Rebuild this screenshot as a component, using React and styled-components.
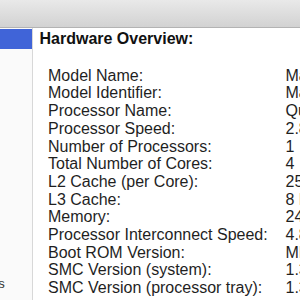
import React, { useLayoutEffect, useRef } from "react";
import styled, { createGlobalStyle } from "styled-components";

const Global = createGlobalStyle`
  html, body { margin: 0; padding: 0; background: #ffffff; }
  #root { width: 300px; height: 300px; overflow: hidden; }
`;

const Window = styled.div`
  width: 300px;
  height: 300px;
  display: flex;
  flex-direction: column;
  overflow: hidden;
  background: #ffffff;
  font-family: "Liberation Sans", Arial, sans-serif;
`;

const Toolbar = styled.div`
  flex: 0 0 27px;
  background: linear-gradient(#e9e9e9, #d2d2d2);
  border-bottom: 1px solid #b3b3b3;
`;

const Body = styled.div`
  flex: 1;
  display: flex;
  min-height: 0;
`;

const Sidebar = styled.div`
  flex: 0 0 32px;
  border-right: 1px solid #d8d8d8;
  background: #fafafa;
  overflow: hidden;
  padding-top: 1px;
`;

const SidebarList = styled.div`
  display: inline-flex;
  flex-direction: column;
  min-width: 100%;
  padding-right: 60px;
`;

const SidebarRow = styled.div`
  height: ${(p) => (p.$selected ? "20px" : "18.75px")};
  display: flex;
  align-items: center;
  padding-left: ${(p) => (p.$indent ? "12px" : "4px")};
  margin-right: ${(p) => (p.$selected ? "-60px" : "0")};
  white-space: nowrap;
  font-size: 13px;
  color: ${(p) => (p.$selected ? "#ffffff" : "#333333")};
  background: ${(p) => (p.$selected ? "#4064d8" : "transparent")};
  font-weight: ${(p) => (p.$selected ? "bold" : "normal")};
`;

const Main = styled.div`
  flex: 1;
  min-width: 0;
  padding: 2px 0 0 6.5px;
  overflow: hidden;
  color: #1f1f1f;
  font-size: 16px;
  line-height: 17.7px;
`;

const Heading = styled.div`
  font-weight: bold;
  color: #111111;
  white-space: nowrap;
`;

const InfoGrid = styled.div`
  display: grid;
  grid-template-columns: 237.5px max-content;
  margin: 19px 0 0 8.5px;
  white-space: nowrap;
`;

const Label = styled.div``;
const Value = styled.div``;

const sidebarItems = [
  "ATA",
  "Apple Pay",
  "Audio",
  "Bluetooth",
  "Camera",
  "Card Reader",
  "Controller",
  "Diagnostics",
  "Disc Burning",
  "Ethernet Cards",
  "Fibre Channel",
  "FireWire",
  "Graphics/Displays",
  "Hardware RAID",
];

const info = [
  ["Model Name:", "Mac Pro"],
  ["Model Identifier:", "MacPro5,1"],
  ["Processor Name:", "Quad-Core Intel Xeon"],
  ["Processor Speed:", "2.8 GHz"],
  ["Number of Processors:", "1"],
  ["Total Number of Cores:", "4"],
  ["L2 Cache (per Core):", "256 KB"],
  ["L3 Cache:", "8 MB"],
  ["Memory:", "24 GB"],
  ["Processor Interconnect Speed:", "4.8 GT/s"],
  ["Boot ROM Version:", "MP51.007F.B03"],
  ["SMC Version (system):", "1.39f11"],
  ["SMC Version (processor tray):", "1.39f11"],
];

export default function App() {
  const sideRef = useRef(null);
  useLayoutEffect(() => {
    if (sideRef.current) sideRef.current.scrollLeft = 112;
  }, []);
  return (
    <Window>
      <Global />
      <Toolbar />
      <Body>
        <Sidebar ref={sideRef}>
          <SidebarList>
            <SidebarRow $selected>Hardware</SidebarRow>
            {sidebarItems.map((s) => (
              <SidebarRow key={s} $indent>
                {s}
              </SidebarRow>
            ))}
          </SidebarList>
        </Sidebar>
        <Main>
          <Heading>Hardware Overview:</Heading>
          <InfoGrid>
            {info.map(([k, v]) => (
              <React.Fragment key={k}>
                <Label>{k}</Label>
                <Value>{v}</Value>
              </React.Fragment>
            ))}
          </InfoGrid>
        </Main>
      </Body>
    </Window>
  );
}
